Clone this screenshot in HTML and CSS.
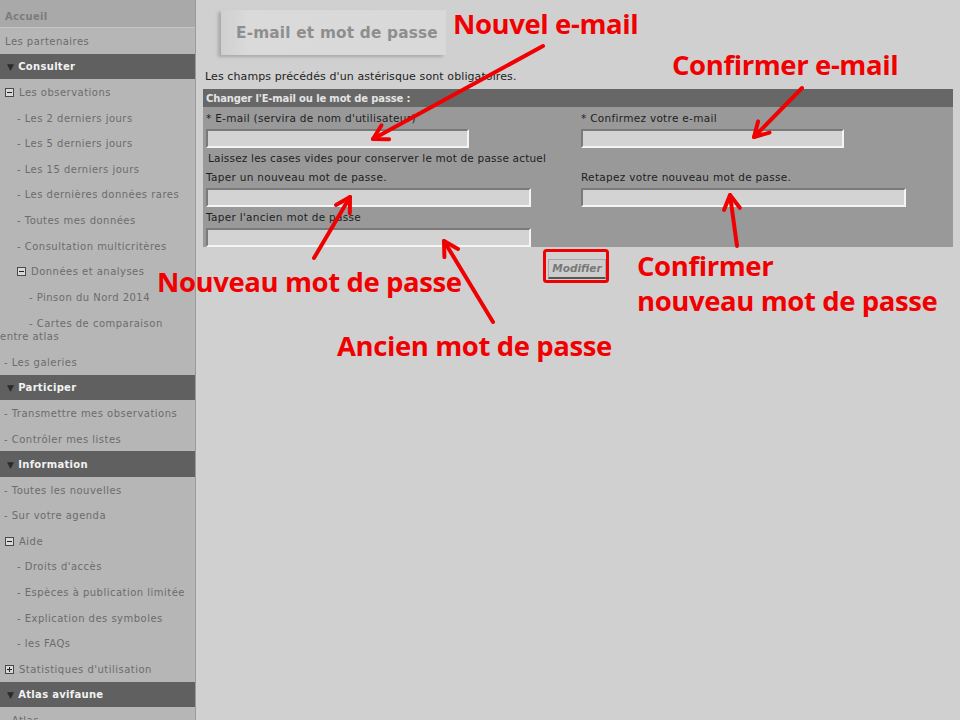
FILE: index.html
```html
<!DOCTYPE html>
<html lang="fr">
<head>
<meta charset="utf-8">
<title>E-mail et mot de passe</title>
<link rel="stylesheet" href="styles.css">
</head>
<body>
<div class="page">
  <nav class="sidebar">
    <div class="row top">Accueil</div>
    <div class="row">Les partenaires</div>
    <div class="row head"><span class="tri">▼</span>Consulter</div>
    <div class="row"><span class="box minus"></span>Les observations</div>
    <div class="row l1">- Les 2 derniers jours</div>
    <div class="row l1">- Les 5 derniers jours</div>
    <div class="row l1">- Les 15 derniers jours</div>
    <div class="row l1">- Les dernières données rares</div>
    <div class="row l1">- Toutes mes données</div>
    <div class="row l1">- Consultation multicritères</div>
    <div class="row l1"><span class="box minus"></span>Données et analyses</div>
    <div class="row l2">- Pinson du Nord 2014</div>
    <div class="row wrap"><span class="ind2"></span>- Cartes de comparaison entre atlas</div>
    <div class="row l0">- Les galeries</div>
    <div class="row head"><span class="tri">▼</span>Participer</div>
    <div class="row l0">- Transmettre mes observations</div>
    <div class="row l0">- Contrôler mes listes</div>
    <div class="row head"><span class="tri">▼</span>Information</div>
    <div class="row l0">- Toutes les nouvelles</div>
    <div class="row l0">- Sur votre agenda</div>
    <div class="row"><span class="box minus"></span>Aide</div>
    <div class="row l1">- Droits d'accès</div>
    <div class="row l1">- Espèces à publication limitée</div>
    <div class="row l1">- Explication des symboles</div>
    <div class="row l1">- les FAQs</div>
    <div class="row"><span class="box plus"></span>Statistiques d'utilisation</div>
    <div class="row head"><span class="tri">▼</span>Atlas avifaune</div>
    <div class="row l0">- Atlas</div>
  </nav>

  <main class="main">
    <div class="title-box"><h1 class="title">E-mail et mot de passe</h1></div>
    <p class="notice">Les champs précédés d'un astérisque sont obligatoires.</p>

    <form class="panel">
      <div class="panel-head">Changer l'E-mail ou le mot de passe :</div>
      <div class="panel-body">
        <div class="field">
          <label class="lbl">* E-mail (servira de nom d'utilisateur)</label>
          <input class="inp short" type="text">
        </div>
        <div class="field">
          <label class="lbl">* Confirmez votre e-mail</label>
          <input class="inp short" type="text">
        </div>
        <div class="hint">Laissez les cases vides pour conserver le mot de passe actuel</div>
        <div class="field">
          <label class="lbl">Taper un nouveau mot de passe.</label>
          <input class="inp long caret" type="password">
        </div>
        <div class="field">
          <label class="lbl">Retapez votre nouveau mot de passe.</label>
          <input class="inp long" type="password">
        </div>
        <div class="field">
          <label class="lbl">Taper l'ancien mot de passe</label>
          <input class="inp long" type="password">
        </div>
      </div>
    </form>
    <div class="actions"><button class="btn" type="button">Modifier</button></div>
  </main>
</div>

<div class="overlay">
  <svg class="arrows" width="960" height="720" viewBox="0 0 960 720">
    <g fill="none" stroke="#f00000" stroke-width="4" stroke-linecap="round" stroke-linejoin="round">
      <line x1="543" y1="46" x2="373" y2="139"/>
      <polyline points="381.5,125.3 373,139 389.1,139.3"/>
      <line x1="802" y1="88" x2="754" y2="137"/>
      <polyline points="758.1,121.4 754,137 769.5,132.6"/>
      <line x1="737" y1="246" x2="730" y2="195"/>
      <polyline points="739.8,207.8 730,195 724,210"/>
      <line x1="314" y1="258" x2="350" y2="197"/>
      <polyline points="349.8,213.2 350,197 336,205"/>
      <line x1="493" y1="322" x2="444" y2="241"/>
      <polyline points="458,248.9 444,241 444.4,257.1"/>
      <rect x="544.5" y="250.5" width="63" height="31" rx="2" stroke-width="3"/>
    </g>
  </svg>
  <div class="note n1">Nouvel e-mail</div>
  <div class="note n2">Confirmer e-mail</div>
  <div class="note n3">Nouveau mot de passe</div>
  <div class="note n4">Ancien mot de passe</div>
  <div class="note n5">Confirmer<br>nouveau mot de passe</div>
</div>
</body>
</html>
```

FILE: styles.css
```css
html, body {
  margin: 0;
  padding: 0;
  width: 960px;
  height: 720px;
  overflow: hidden;
  background: #d0d0d0;
  font-family: "DejaVu Sans", Verdana, sans-serif;
}

.page {
  display: flex;
  height: 720px;
}

/* ---------- sidebar ---------- */
.sidebar {
  width: 195px;
  flex: none;
  background: #b6b6b6;
  border-right: 1px solid #9a9a9a;
  font-size: 10px;
  letter-spacing: 0.48px;
  color: #6c6c6c;
  overflow: hidden;
}

.row {
  height: 25.6px;
  display: flex;
  align-items: center;
  padding-left: 5px;
  padding-top: 1px;
  white-space: nowrap;
  box-sizing: border-box;
}

.row.top {
  height: 28px;
  padding-top: 5px;
  background: #a9a9a9;
  border-bottom: 1px solid #c6c6c6;
  font-weight: bold;
  color: #7c7c7c;
  letter-spacing: 0.3px;
}

.row.head {
  background: #606060;
  color: #f2f2f2;
  font-weight: bold;
  padding-left: 7px;
  letter-spacing: 0.3px;
}

.tri {
  font-size: 9px;
  color: #2a2a2a;
  margin-right: 4px;
}

.row.l0 { padding-left: 4px; }
.row.l1 { padding-left: 17px; }
.row.l2 { padding-left: 29px; }

.row.wrap {
  display: block;
  height: 39.4px;
  padding: 7px 0 0 0;
  line-height: 13px;
  white-space: normal;
}

.ind2 {
  display: inline-block;
  width: 29px;
}

.box {
  width: 7px;
  height: 7px;
  border: 1px solid #4a4a4a;
  background: #d8d8d8;
  margin-right: 5px;
  position: relative;
  flex: none;
}
.box::before {
  content: "";
  position: absolute;
  left: 1px;
  right: 1px;
  top: 3px;
  height: 1px;
  background: #222;
}
.box.plus::after {
  content: "";
  position: absolute;
  top: 1px;
  bottom: 1px;
  left: 3px;
  width: 1px;
  background: #222;
}

/* ---------- main ---------- */
.main {
  flex: 1;
  position: relative;
}

.title-box {
  margin: 10px 0 0 25px;
  width: 225px;
  height: 45px;
  box-sizing: border-box;
  background: linear-gradient(to right, #cfcfcf, #dadada 12%, #d9d9d9);
  box-shadow: -3px 2px 3px #a9a9a9;
  display: flex;
  align-items: center;
  padding-left: 15px;
}

.title {
  margin: 0;
  font-size: 15.3px;
  font-weight: bold;
  color: #8e8e8e;
  letter-spacing: 0.2px;
}

.notice {
  margin: 15px 0 0 9px;
  font-size: 11px;
  letter-spacing: 0.1px;
  color: #1e1e1e;
  line-height: 13px;
}

.panel {
  margin: 6px 0 0 7px;
  width: 750px;
  background: #999999;
}

.panel-head {
  height: 18px;
  background: #676767;
  color: #e4e4e4;
  font-size: 10px;
  font-weight: bold;
  letter-spacing: -0.15px;
  line-height: 19px;
  padding-left: 3px;
}

.panel-body {
  display: grid;
  grid-template-columns: 375px 1fr;
  padding: 5px 0 0 3px;
  color: #1e1e1e;
  font-size: 10.5px;
  letter-spacing: 0.3px;
}

.field {
  display: flex;
  flex-direction: column;
  align-items: flex-start;
}

.lbl {
  line-height: 13px;
  height: 13px;
  margin-bottom: 4px;
}

.hint {
  grid-column: 1 / 3;
  line-height: 13px;
  padding: 4px 0 6px 2px;
  letter-spacing: 0.2px;
}

.inp {
  height: 19px;
  box-sizing: border-box;
  margin: 0;
  padding: 0 2px;
  background: #d3d3d3;
  border-style: solid;
  border-width: 2px;
  border-color: #7a7a7a #f4f4f4 #f4f4f4 #7a7a7a;
  font: inherit;
}
.inp.short { width: 263px; }
.inp.long { width: 325px; }

.field:nth-child(4),
.field:nth-child(5) {
  margin-bottom: 4px;
}

.actions {
  padding: 10px 0 0 352px;
}

.btn {
  width: 58px;
  height: 20px;
  box-sizing: border-box;
  padding: 0;
  background: #cdcdcd;
  border-style: solid;
  border-width: 1px 1px 2px 1px;
  border-color: #a8a8a8 #a8a8a8 #555 #a8a8a8;
  font-family: "DejaVu Sans", Verdana, sans-serif;
  font-size: 10.5px;
  font-weight: bold;
  font-style: italic;
  color: #777;
}

/* ---------- annotations overlay ---------- */
.overlay {
  position: absolute;
  left: 0;
  top: 0;
  width: 960px;
  height: 720px;
  pointer-events: none;
}

.arrows {
  position: absolute;
  left: 0;
  top: 0;
}

.note {
  position: absolute;
  font-family: "Open Sans", "Noto Sans", sans-serif;
  font-weight: bold;
  font-size: 27.5px;
  line-height: 38px;
  color: #f00000;
  white-space: nowrap;
  letter-spacing: -0.4px;
}
.n1 { left: 453px; top: 5px; }
.n2 { left: 672px; top: 46px; }
.n3 { left: 157px; top: 263px; }
.n4 { left: 337px; top: 327px; }
.n5 { left: 637px; top: 248px; line-height: 35px; }
```
